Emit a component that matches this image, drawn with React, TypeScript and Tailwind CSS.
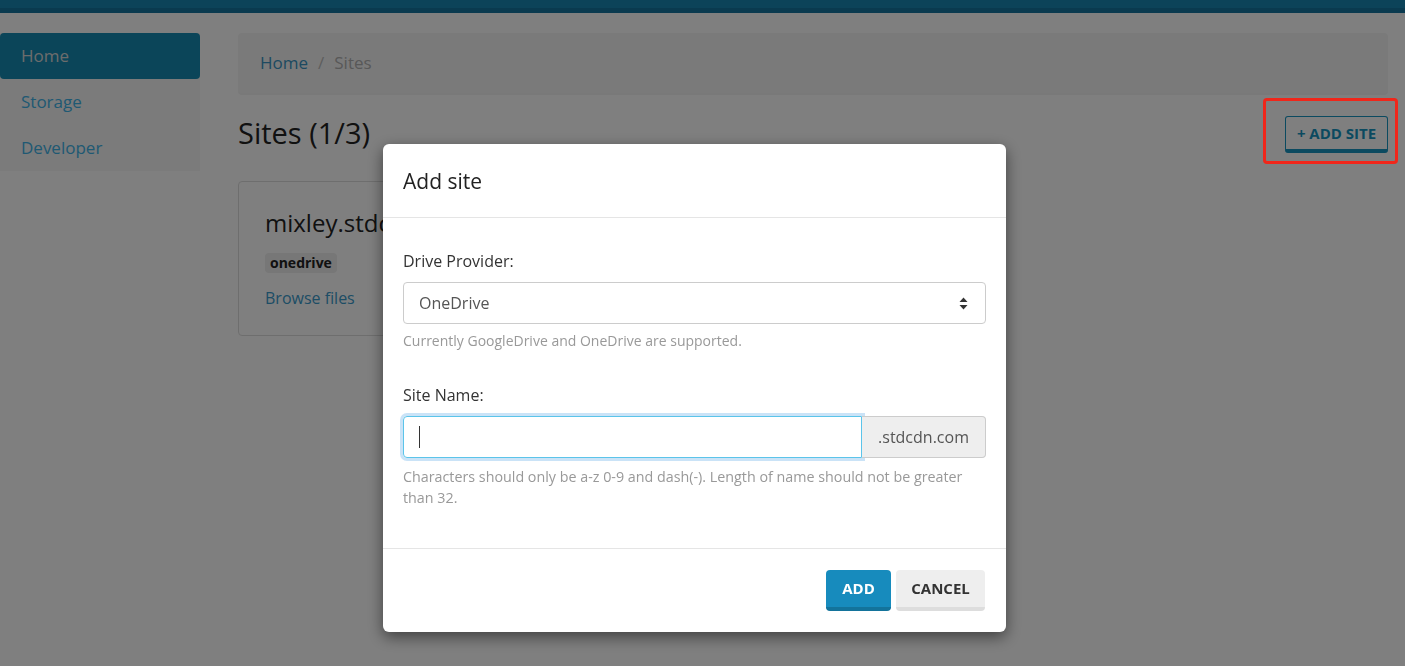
const font = "font-['Open_Sans','Noto_Sans',sans-serif]"

function SelectArrows() {
  return (
    <svg width="9" height="13" viewBox="0 0 9 13" aria-hidden="true">
      <path d="M4.5 0.5 L8.5 5 L0.5 5 Z" fill="#333" />
      <path d="M4.5 12.5 L8.5 8 L0.5 8 Z" fill="#333" />
    </svg>
  )
}

function Sidebar() {
  const items = ['Home', 'Storage', 'Developer']
  return (
    <nav className="w-[200px] shrink-0 self-start bg-[#f6f6f6]">
      {items.map((label, i) => (
        <a
          key={label}
          href="#"
          className={
            i === 0
              ? 'flex h-[46px] items-center rounded-[4px] bg-[#168ab2] px-[21px] text-[17px] text-[#d9d9d9]'
              : 'flex h-[46px] items-center px-[21px] text-[17px] text-[#3fb2e6]'
          }
        >
          {label}
        </a>
      ))}
    </nav>
  )
}

function AddSiteModal() {
  return (
    <div className="fixed left-[383px] top-[144px] z-50 w-[623px] rounded-[6px] bg-white shadow-[0_5px_15px_rgba(0,0,0,0.5)]">
      <div className="flex h-[74px] items-center border-b border-[#e5e5e5] px-[20px] pt-[3px]">
        <h4 className="text-[21px] text-[#222]">Add site</h4>
      </div>

      <div className="px-[20px] pb-[40px] pt-[32px]">
        <label className="block text-[16px] leading-[22px] text-[#333]">Drive Provider:</label>
        <div className="mt-[10px] flex h-[42px] items-center justify-between rounded-[4px] border border-[#cccccc] pl-[15px] pr-[17px]">
          <span className="text-[16px] text-[#555]">OneDrive</span>
          <SelectArrows />
        </div>
        <p className="mt-[8px] text-[14px] leading-[18px] text-[#999]">
          Currently GoogleDrive and OneDrive are supported.
        </p>

        <label className="mt-[34px] block text-[16px] leading-[22px] text-[#333]">Site Name:</label>
        <div className="mt-[10px] flex h-[42px]">
          <div className="flex flex-1 items-center rounded-l-[4px] border border-[#5bc4ea] px-[15px] shadow-[0_0_0_3px_rgba(102,175,233,0.35)]">
            <span className="h-[22px] w-px bg-[#333]" />
          </div>
          <div className="flex w-[124px] items-center justify-center rounded-r-[4px] border border-l-0 border-[#cccccc] bg-[#eeeeee] text-[16px] text-[#555]">
            .stdcdn.com
          </div>
        </div>
        <p className="mt-[8px] pr-[15px] text-[14.3px] leading-[21px] text-[#999]">
          Characters should only be a-z 0-9 and dash(-). Length of name should not be greater than 32.
        </p>
      </div>

      <div className="flex justify-end gap-[5px] border-t border-[#e5e5e5] px-[21px] py-[21px]">
        <button
          type="button"
          className="h-[41px] w-[65px] rounded-[4px] border-b-[4px] border-[#13739b] bg-[#178bbd] text-[15px] font-bold text-white"
        >
          ADD
        </button>
        <button
          type="button"
          className="h-[41px] w-[89px] rounded-[4px] border-b-[4px] border-[#dddddd] bg-[#eeeeee] text-[15px] font-bold text-[#333]"
        >
          CANCEL
        </button>
      </div>
    </div>
  )
}

export default function App() {
  return (
    <div className={`${font} relative min-h-screen bg-white`}>
      <div className="h-[13px] border-b-[5px] border-[#14749e] bg-[#1886b2]" />

      <div className="flex pt-[20px]">
        <Sidebar />

        <main className="ml-[38px] mr-[17px] flex-1">
          <div className="flex h-[60px] items-center rounded-[4px] bg-[#f5f5f5] px-[22px] text-[17px] shadow-[0_2px_0_rgba(0,0,0,0.05)]">
            <a href="#" className="text-[#3a94c2]">Home</a>
            <span className="px-[10px] text-[#bbb]">/</span>
            <span className="text-[#b0b0b0]">Sites</span>
          </div>

          <div className="mt-[22px] flex items-center justify-between">
            <h1 className="mb-[3px] text-[29px] leading-[36px] text-[#222]">Sites (1/3)</h1>
            <div className="relative">
              <button
                type="button"
                className="h-[37px] w-[103px] rounded-[3px] border border-b-[4px] border-[#1694c0] text-[15px] font-bold text-[#1694c0]"
              >
                + ADD SITE
              </button>
              <div className="pointer-events-none absolute -bottom-[11px] -left-[22px] -right-[10px] -top-[18px] z-[60] rounded-[4px] border-[3px] border-[#f0261a]" />
            </div>
          </div>

          <div className="mt-[27px] flex w-[340px] flex-col items-start rounded-[4px] border border-[#dddddd] px-[26px] pb-[26px] pt-[24px]">
            <h3 className="whitespace-nowrap text-[24px] leading-[34px] text-[#222]">mixley.stdcdn.com</h3>
            <span className="mt-[13px] rounded-[4px] bg-[#eeeeee] px-[5px] text-[14px] font-bold leading-[20px] text-[#222]">
              onedrive
            </span>
            <a href="#" className="mt-[14px] text-[16px] leading-[22px] text-[#3a9acb]">Browse files</a>
          </div>
        </main>
      </div>

      <div className="fixed inset-0 z-40 bg-black/50" />
      <AddSiteModal />
    </div>
  )
}
